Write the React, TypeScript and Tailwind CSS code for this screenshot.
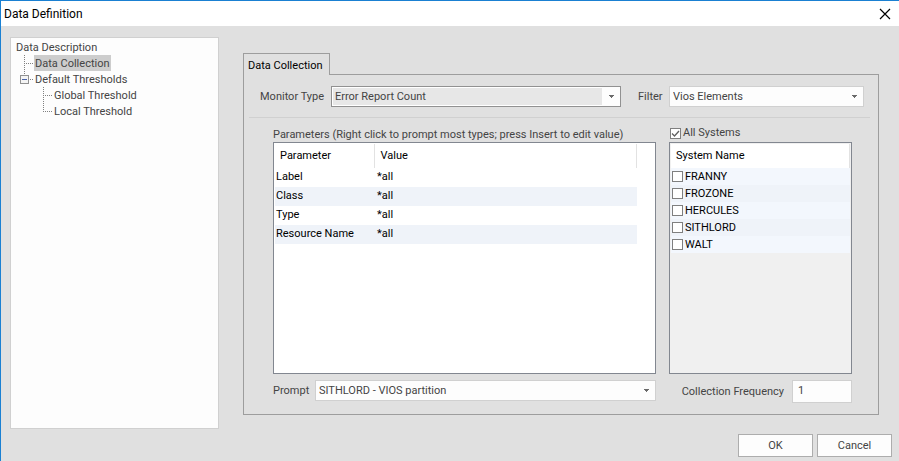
import React, { useState } from 'react';

const PARAMETERS = [
  { name: 'Label', value: '*all' },
  { name: 'Class', value: '*all' },
  { name: 'Type', value: '*all' },
  { name: 'Resource Name', value: '*all' },
];

const SYSTEMS = ['FRANNY', 'FROZONE', 'HERCULES', 'SITHLORD', 'WALT'];

function TreeBranch({ kind }: { kind: 'tee' | 'end' | 'box' }) {
  return (
    <svg width="18" height="16" className="shrink-0" fill="none" shapeRendering="crispEdges">
      {kind === 'tee' && <path d="M8.5 0V16" stroke="#808080" strokeDasharray="1 1" />}
      {kind === 'end' && <path d="M8.5 0V9" stroke="#808080" strokeDasharray="1 1" />}
      {kind === 'box' && <path d="M8.5 0V4" stroke="#808080" strokeDasharray="1 1" />}
      <path d={kind === 'box' ? 'M14 8.5H18' : 'M10 8.5H17'} stroke="#808080" strokeDasharray="1 1" />
      {kind === 'box' && (
        <>
          <rect x="4.5" y="4.5" width="8" height="8" fill="#f4f4f4" stroke="#919191" />
          <path d="M6 8.5H11" stroke="#4b63a7" />
        </>
      )}
    </svg>
  );
}

function Tree() {
  return (
    <ul className="w-[209px] shrink-0 border border-[#d0d0d0] bg-[#fdfdfd] px-[5px] py-px leading-[14px] whitespace-nowrap">
      <li>
        <span className="block pt-[2px]">Data Description</span>
        <ul>
          <li className="flex">
            <TreeBranch kind="tee" />
            <span className="bg-[#cdcdcd] px-px pt-[2px]">Data Collection</span>
          </li>
          <li>
            <div className="flex">
              <TreeBranch kind="box" />
              <span className="px-px pt-[2px]">Default Thresholds</span>
            </div>
            <ul className="pl-[19px]">
              <li className="flex">
                <TreeBranch kind="tee" />
                <span className="px-px pt-[2px]">Global Threshold</span>
              </li>
              <li className="flex">
                <TreeBranch kind="end" />
                <span className="px-px pt-[2px]">Local Threshold</span>
              </li>
            </ul>
          </li>
        </ul>
      </li>
    </ul>
  );
}

function DropArrow() {
  return (
    <svg width="5" height="3" fill="#6a6a6a" shapeRendering="crispEdges">
      <path d="M0 0h5v1h-1v1h-1v1h-1v-1h-1v-1h-1z" />
    </svg>
  );
}

type SelectProps = { id: string; option: string; active?: boolean };

function Select({ id, option, active }: SelectProps) {
  return (
    <div className="relative w-full">
      <select
        id={id}
        className={
          active
            ? 'block h-[21px] w-full appearance-none border border-[#919191] bg-[#e7e7e7] pt-[2px] pl-[3px] shadow-[inset_0_0_0_1px_#fff]'
            : 'block h-[21px] w-full appearance-none border border-[#d0d0d0] bg-[#fdfdfd] pt-[2px] pl-[3px]'
        }
      >
        <option>{option}</option>
      </select>
      <span className="pointer-events-none absolute inset-y-px right-px flex w-[18px] items-center justify-center bg-[#fdfdfd]">
        <DropArrow />
      </span>
    </div>
  );
}

type CheckBoxProps = { label: string; checked: boolean; onChange: () => void };

function CheckBox({ label, checked, onChange }: CheckBoxProps) {
  return (
    <label className="flex items-center gap-[2px]">
      <span className="relative block size-[11px]">
        <input
          type="checkbox"
          checked={checked}
          onChange={onChange}
          className="block size-[11px] appearance-none border border-[#7f7f7f] bg-white"
        />
        {checked && (
          <svg viewBox="0 0 11 11" className="pointer-events-none absolute inset-0 size-[11px]" fill="none">
            <path d="M2 5.5L4.5 8L9 3" stroke="#606060" strokeWidth="1.3" />
          </svg>
        )}
      </span>
      {label}
    </label>
  );
}

function App() {
  const [allSystems, setAllSystems] = useState(true);
  const [selected, setSelected] = useState<string[]>([]);

  const toggle = (name: string) =>
    setSelected(selected.includes(name) ? selected.filter(s => s !== name) : [...selected, name]);

  return (
    <div className="flex min-h-screen flex-col border-t border-l border-[#1a80d2] bg-[#e0e0e0] font-['Roboto',sans-serif] text-[11px] text-[#444]">
      <header className="flex h-[25px] items-center justify-between bg-white pr-2 pl-[3px] text-black">
        <h1 className="text-[12px]">Data Definition</h1>
        <button aria-label="Close">
          <svg width="12" height="12" viewBox="0 0 12 12" fill="none">
            <path d="M1 1L11 11M11 1L1 11" stroke="#000" strokeWidth="1.2" />
          </svg>
        </button>
      </header>

      <div className="flex grow gap-6 pt-[11px] pr-5 pl-[9px]">
        <Tree />

        <main className="min-w-0 grow pt-4">
          <div className="flex">
            <button className="relative -mb-px h-[22px] w-[87px] border border-b-0 border-[#9d9d9d] bg-[#e0e0e0] pt-[3px] pl-1 text-left text-black">
              Data Collection
            </button>
          </div>
          <section className="border border-[#9d9d9d] pt-[11px] pb-[11px]">
            <div className="flex items-center pr-[14px] pl-4">
              <label htmlFor="monitor" className="w-[71px] shrink-0 pt-[2px]">Monitor Type</label>
              <Select id="monitor" option="Error Report Count" active />
              <label htmlFor="filter" className="ml-4 w-8 shrink-0 pt-[2px] pl-px">Filter</label>
              <div className="w-[195px] shrink-0">
                <Select id="filter" option="Vios Elements" />
              </div>
            </div>
            <hr className="mr-2 ml-[5px] mt-[10px] border-[#d0d0d0]" />

            <div className="flex gap-[13px] pr-[26px] pl-[29px] pt-2">
              <div className="min-w-0 grow">
                <h2 className="h-4 leading-[18px] whitespace-nowrap">
                  Parameters (Right click to prompt most types; press Insert to edit value)
                </h2>
                <div className="h-[232px] border border-[#828790] bg-white py-px pr-[18px] pl-px text-black">
                  <table className="w-full table-fixed border-collapse text-left">
                    <thead>
                      <tr className="h-6">
                        <th className="w-[99px] border-r border-[#e2e2e2] p-0 pl-[5px] font-normal">Parameter</th>
                        <th className="border-r border-[#e2e2e2] p-0 pl-[6px] font-normal">Value</th>
                      </tr>
                    </thead>
                    <tbody>
                      {PARAMETERS.map(param => (
                        <tr key={param.name} className="h-[19px] leading-4 even:bg-[#eff3f9]">
                          <td className="p-0 pb-px pl-px">{param.name}</td>
                          <td className="p-0 pb-px pl-[3px]">{param.value}</td>
                        </tr>
                      ))}
                    </tbody>
                  </table>
                </div>
                <div className="mt-[6px] flex items-center">
                  <label htmlFor="prompt" className="w-[42px] shrink-0 pt-[2px]">Prompt</label>
                  <Select id="prompt" option="SITHLORD - VIOS partition" />
                </div>
              </div>

              <div className="w-[183px] shrink-0">
                <div className="h-4 pl-px leading-[14px]">
                  <CheckBox label="All Systems" checked={allSystems} onChange={() => setAllSystems(!allSystems)} />
                </div>
                <div className="h-[232px] border border-[#828790] bg-[#f0f0f0] p-px text-black">
                  <h3 className="flex h-6 items-center border-r border-[#e2e2e2] bg-white pl-[5px]">System Name</h3>
                  <ul>
                    {SYSTEMS.map(name => (
                      <li key={name} className="h-[17px] pl-px leading-[17px] odd:bg-[#f3f7fd] even:bg-[#eff3f9]">
                        <CheckBox label={name} checked={selected.includes(name)} onChange={() => toggle(name)} />
                      </li>
                    ))}
                  </ul>
                </div>
                <div className="mt-[6px] flex items-center justify-end gap-2 whitespace-nowrap">
                  <label htmlFor="frequency" className="pt-[2px]">Collection Frequency</label>
                  <input
                    id="frequency"
                    defaultValue="1"
                    className="h-[23px] w-[60px] border border-[#d0d0d0] bg-[#fdfdfd] px-[5px] pb-[2px]"
                  />
                </div>
              </div>
            </div>
          </section>
        </main>
      </div>

      <footer className="flex justify-end gap-1 pt-[5px] pr-[7px] pb-1">
        <button className="h-[23px] w-[75px] border border-[#adadad] bg-[#fdfdfd] pt-[2px]">OK</button>
        <button className="h-[23px] w-[75px] border border-[#adadad] bg-[#fdfdfd] pt-[2px]">Cancel</button>
      </footer>
    </div>
  );
}

export default App;
